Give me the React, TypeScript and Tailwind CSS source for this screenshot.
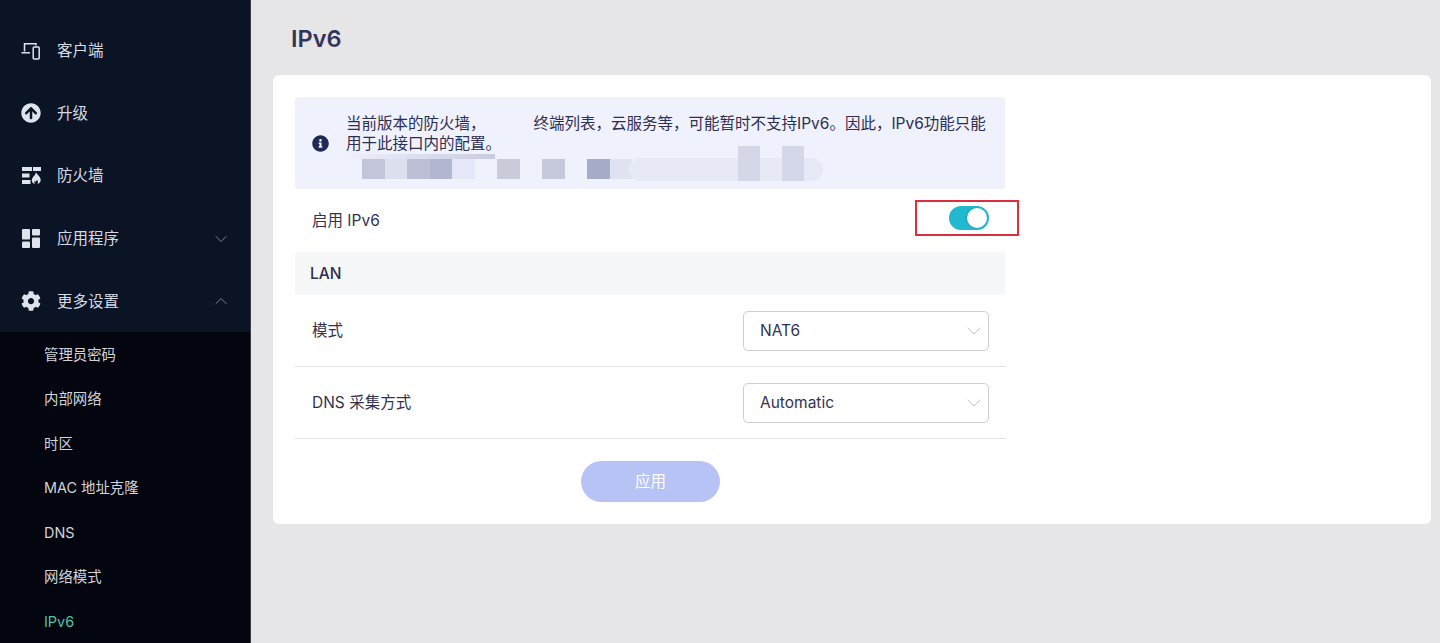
import { ChevronDown, ChevronUp } from "lucide-react";
import type { ReactNode } from "react";
import { FaArrowCircleUp, FaCog, FaInfoCircle } from "react-icons/fa";

const ClientIcon = () => (
  <svg width="20" height="18" viewBox="0 0 20 18" fill="none" stroke="#dfe3ee" strokeWidth="1.5">
    <path d="M3.5 9.5V1.800H15V3.500" />
    <path d="M0.500 10.800H9" />
    <rect x="12.200" y="5" width="6" height="12" rx="1" />
  </svg>
);

const FirewallIcon = () => (
  <svg width="19" height="17" viewBox="0 0 19 17" fill="#dfe3ee">
    <rect x="0" y="0" width="10" height="4" />
    <rect x="11" y="0" width="8" height="4" />
    <rect x="0" y="6.500" width="7.500" height="4" />
    <rect x="0" y="13" width="8.500" height="4" />
    <path d="M14 5c.6 2.400 4.700 4.400 4.700 8 0 2.200-1.600 3.700-3.300 4 .9-1.100.9-2.600-.5-4-1 1.100-1.200 1.600-1.400 2.300-.5-.5-.7-1-.7-1.500-.7 1-.5 2.400.2 3.200-1.900-.3-3.200-1.800-3.200-3.700 0-3.300 3.700-4.600 4.200-8.300z" />
  </svg>
);

const GridIcon = () => (
  <svg width="18" height="19" viewBox="0 0 18 19" fill="#dfe3ee">
    <rect x="0" y="0" width="8" height="10.500" rx="1" />
    <rect x="10" y="0" width="8" height="6.500" rx="1" />
    <rect x="0" y="12.500" width="8" height="6.500" rx="1" />
    <rect x="10" y="8.500" width="8" height="10.500" rx="1" />
  </svg>
);

type MenuItem = { label: string; icon: ReactNode; arrow?: "up" | "down" };

const menuItems: MenuItem[] = [
  { label: "客户端", icon: <ClientIcon /> },
  { label: "升级", icon: <FaArrowCircleUp size={20} color="#dfe3ee" /> },
  { label: "防火墙", icon: <FirewallIcon /> },
  { label: "应用程序", icon: <GridIcon />, arrow: "down" },
  { label: "更多设置", icon: <FaCog size={20} color="#dfe3ee" />, arrow: "up" },
];

const subItems = ["管理员密码", "内部网络", "时区", "MAC 地址克隆", "DNS", "网络模式", "IPv6"];

const blurBlocks = [
  "bg-[#c3c6da]",
  "bg-[#dcdfee]",
  "bg-[#bcbfd5]",
  "bg-[#b2b6d0]",
  "bg-[#e4e7f7]",
  "bg-transparent",
  "bg-[#c9cbdb]",
  "bg-transparent",
  "bg-[#c6c9da]",
  "bg-transparent",
  "bg-[#a7acc9]",
  "bg-[#dfe2f0]",
];

const Sidebar = () => (
  <aside className="flex h-[643px] w-[251px] shrink-0 flex-col overflow-hidden border-r border-[#3a3f4a] bg-[#0b1424]">
    <div className="flex flex-col pt-[19.500px]">
      {menuItems.map((item) => (
        <div key={item.label} className="flex h-[62.600px] items-center pr-[19px] pl-[21px] text-[#d5d9e4]">
          <span className="flex w-[20px] justify-center">{item.icon}</span>
          <span className="ml-[16px] flex-1 text-[15.500px]">{item.label}</span>
          {item.arrow === "down" && <ChevronDown size={20} strokeWidth={1} color="#8f97a8" />}
          {item.arrow === "up" && <ChevronUp size={20} strokeWidth={1} color="#8f97a8" />}
        </div>
      ))}
    </div>
    <div className="flex flex-1 flex-col bg-[#03050f]">
      {subItems.map((item) => (
        <div
          key={item}
          className={`flex h-[44.500px] shrink-0 items-center pl-[44px] text-[14.400px] ${
            item === "IPv6" ? "text-[#4fc3a5]" : "text-[#d2d4da]"
          }`}
        >
          {item}
        </div>
      ))}
    </div>
  </aside>
);

const Select = ({ value }: { value: string }) => (
  <div className="flex h-[40px] w-[246px] items-center justify-between rounded-[5px] border border-[#cfcfd3] bg-white pr-[2px] pl-[16px] text-[15.500px] text-[#33334f]">
    <span>{value}</span>
    <ChevronDown size={24} strokeWidth={0.8} color="#b5b5bb" />
  </div>
);

export default function App() {
  return (
    <div
      className="flex h-[643px] w-[1440px] overflow-hidden bg-[#e6e6e8]"
      style={{ fontFamily: 'Inter, "Noto Sans CJK SC", sans-serif' }}
    >
      <Sidebar />
      <main className="flex-1 pl-[22px]">
        <h1 className="flex h-[75px] items-center pt-[3px] pl-[18px] text-[23.500px] font-semibold text-[#34345a]">IPv6</h1>
        <section className="h-[449px] w-[1158px] rounded-[6px] bg-white pt-[22px] pl-[22px]">
          <div className="w-[711px] text-[15.500px] text-[#33334f]">
            <div className="relative flex h-[92px] w-[710px] items-start rounded-[3px] bg-[#eff1fd] pt-[17px] pl-[17px] text-[#2e2e50]">
              <FaInfoCircle size={17} color="#1c2a55" className="mt-[21px] shrink-0" />
              <div className="ml-[17px] w-[645px] leading-[20px]">
                <div className="flex">
                  <span>当前版本的防火墙，</span>
                  <span className="ml-[48px] whitespace-nowrap">终端列表，云服务等，可能暂时不支持IPv6。因此，IPv6功能只能</span>
                </div>
                <div>用于此接口内的配置。</div>
              </div>
              <div className="absolute top-[57px] left-[46px] h-[5px] w-[154px] bg-linear-to-r from-[#eff1fd] to-[#c9cce0] blur-[0.5px]" />
              <div className="absolute top-[62px] left-[67px] grid h-[20px] grid-cols-[repeat(12,22.500px)] blur-[0.5px]">
                {blurBlocks.map((block, i) => (
                  <div key={i} className={block} />
                ))}
              </div>
              <div className="absolute top-[61px] left-[334px] h-[23px] w-[194px] rounded-full bg-[#e7e9f6]" />
              <div className="absolute top-[49px] left-[443px] h-[35px] w-[22px] bg-[#d4d7e8] blur-[0.5px]" />
              <div className="absolute top-[49px] left-[487px] h-[35px] w-[22px] bg-[#d4d7e8] blur-[0.5px]" />
            </div>

            <div className="flex h-[63px] items-center justify-between pr-[17px] pl-[17px]">
              <span>启用 IPv6</span>
              <div className="relative mb-[5px] flex h-[24px] w-[40px] items-center justify-end rounded-full bg-[#22b8cf] pr-[2px]">
                <div className="h-[20px] w-[20px] rounded-full bg-white shadow-[-1px_0_2px_rgba(0,0,0,0.15)]" />
                <div className="absolute top-[-6px] right-[-30px] h-[36px] w-[104px] border-2 border-[#d9303f]" />
              </div>
            </div>

            <div className="flex h-[43px] w-[710px] items-center rounded-[3px] bg-[#f6f7f8] pl-[15px] font-medium text-[#2e2e50]">
              LAN
            </div>

            <div className="flex h-[72px] items-center justify-between border-b border-[#e5e5e8] pr-[17px] pl-[17px]">
              <span>模式</span>
              <Select value="NAT6" />
            </div>
            <div className="flex h-[72px] items-center justify-between border-b border-[#e5e5e8] pr-[17px] pl-[17px]">
              <span>DNS 采集方式</span>
              <Select value="Automatic" />
            </div>

            <div className="flex justify-center pt-[22px]">
              <button className="h-[41px] w-[139px] rounded-full bg-[#b7c3f5] text-white">应用</button>
            </div>
          </div>
        </section>
      </main>
    </div>
  );
}
